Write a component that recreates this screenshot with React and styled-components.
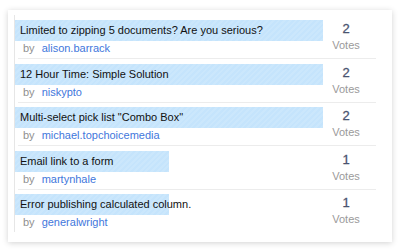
import React from 'react';
import styled, { createGlobalStyle } from 'styled-components';

const GlobalStyle = createGlobalStyle`
  html, body {
    margin: 0;
    padding: 0;
    background: #ffffff;
  }
  body {
    font-family: "Liberation Sans", Arial, sans-serif;
  }
`;

const Page = styled.div`
  padding: 10px 8px 0;
  width: 400px;
  height: 250px;
  box-sizing: border-box;
`;

const Card = styled.div`
  width: 384px;
  height: 232px;
  box-sizing: border-box;
  background: #fff;
  box-shadow: 0 1px 6px rgba(0, 0, 0, 0.18);
  padding: 5px 0 10px 6px;
`;

const List = styled.div`
  width: 362px;
  height: 217px;
  box-sizing: border-box;
  border-left: 1px solid #e6e6e6;
  padding-top: 5px;
`;

const Item = styled.div`
  & + & {
    margin-top: 4.5px;
  }
`;

const Row = styled.div`
  display: flex;
  height: 38px;
`;

const Main = styled.div`
  width: 308px;
`;

const Bar = styled.div`
  height: 21px;
  box-sizing: border-box;
  padding-left: 5px;
  line-height: 21px;
  font-size: 11px;
  color: #111;
  white-space: nowrap;
  overflow: visible;
  background: repeating-linear-gradient(
    135deg,
    #c5e4fc 0px,
    #c5e4fc 2px,
    #cbe7fc 2px,
    #cbe7fc 4px
  );
`;

const Byline = styled.div`
  padding-left: 8px;
  height: 15px;
  line-height: 15px;
  font-size: 11px;
  color: #909090;
`;

const By = styled.span`
  margin-right: 7px;
`;

const User = styled.a`
  color: #4277dc;
  text-decoration: none;
`;

const Votes = styled.div`
  width: 46px;
  text-align: center;
`;

const Count = styled.div`
  font-size: 13px;
  line-height: 17px;
  color: #4a5370;
  -webkit-text-stroke: 0.3px #4a5370;
`;

const Label = styled.div`
  font-size: 11px;
  line-height: 17px;
  color: #9a9a9a;
`;

const Divider = styled.div`
  height: 1px;
  margin-left: 3px;
  background: #ececec;
`;

const items = [
  { title: 'Limited to zipping 5 documents? Are you serious?', user: 'alison.barrack', votes: 2 },
  { title: '12 Hour Time: Simple Solution', user: 'niskypto', votes: 2 },
  { title: 'Multi-select pick list "Combo Box"', user: 'michael.topchoicemedia', votes: 2 },
  { title: 'Email link to a form', user: 'martynhale', votes: 1 },
  { title: 'Error publishing calculated column.', user: 'generalwright', votes: 1 },
];

const maxVotes = Math.max(...items.map((i) => i.votes));

const App = () => {
  return (
    <Page>
      <GlobalStyle />
      <Card>
        <List>
          {items.map((item, idx) => (
            <Item key={item.title}>
              <Row>
                <Main>
                  <Bar style={{ width: `${(item.votes / maxVotes) * 100}%` }}>{item.title}</Bar>
                  <Byline>
                    <By>by</By>
                    <User href="#">{item.user}</User>
                  </Byline>
                </Main>
                <Votes>
                  <Count>{item.votes}</Count>
                  <Label>Votes</Label>
                </Votes>
              </Row>
              {idx < items.length - 1 && <Divider />}
            </Item>
          ))}
        </List>
      </Card>
    </Page>
  );
};

export default App;
